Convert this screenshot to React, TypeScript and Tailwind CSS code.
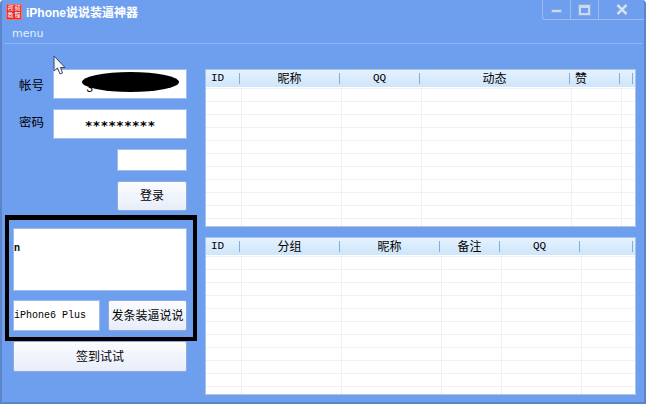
import React from 'react'

type Col = {
  label: string
  head: string
  body: string
  left?: boolean
  mono?: boolean
}

const TOP_COLS: Col[] = [
  { label: 'ID', head: 'w-[34px]', body: 'w-[36px]', left: true, mono: true },
  { label: '昵称', head: 'w-[100px]', body: 'w-[100px]' },
  { label: 'QQ', head: 'w-[80px]', body: 'w-[80px]', mono: true },
  { label: '动态', head: 'w-[150px]', body: 'w-[150px]' },
  { label: '赞', head: 'w-[50px]', body: 'w-[50px]', left: true },
  { label: '', head: 'w-[13px]', body: 'w-[12px]' },
]

const BOTTOM_COLS: Col[] = [
  { label: 'ID', head: 'w-[34px]', body: 'w-[36px]', left: true, mono: true },
  { label: '分组', head: 'w-[100px]', body: 'w-[100px]' },
  { label: '昵称', head: 'w-[100px]', body: 'w-[100px]' },
  { label: '备注', head: 'w-[60px]', body: 'w-[60px]' },
  { label: 'QQ', head: 'w-[80px]', body: 'w-[80px]', mono: true },
  { label: '', head: 'w-[53px]', body: 'w-[52px]' },
]

const ROWS = [0, 1, 2, 3, 4, 5, 6, 7, 8, 9, 10]

const SANS = "font-['Liberation_Sans','Noto_Sans_CJK_SC',sans-serif]"
const MONO = "font-['Liberation_Mono','Noto_Sans_CJK_SC',monospace]"

function Grid({ cols }: { cols: Col[] }) {
  return (
    <div className="h-[158px] shrink-0 bg-white border border-[#a9c3ea] border-b-[#b9c4d4] overflow-hidden">
      <div className="flex h-[17px] bg-gradient-to-b from-[#e4f2fe] to-[#cfe5fa]">
        {cols.map((c, i) => (
          <div key={i} className={`${c.head} shrink-0 h-full py-[3px]`}>
            <div
              className={`h-full border-r border-[#85aedb] flex items-center text-black ${
                c.left ? 'pl-[5px]' : 'justify-center'
              } ${c.mono ? `${MONO} text-[11px]` : `${SANS} text-[12px]`}`}
            >
              {c.label}
            </div>
          </div>
        ))}
      </div>
      <div className="pt-[1px] pr-[1px]">
        {ROWS.map((r) => (
          <div key={r} className="flex h-[13px] border-t border-[#f0f0f0]">
            {cols.map((c, i) => (
              <div
                key={i}
                className={`${c.body} shrink-0 h-full ${i < cols.length - 1 ? 'border-r border-[#f0f0f0]' : ''}`}
              />
            ))}
          </div>
        ))}
      </div>
    </div>
  )
}

function Btn({ className, children }: { className: string; children: React.ReactNode }) {
  return (
    <div
      className={`${className} flex items-center justify-center whitespace-nowrap rounded-[2px] border border-[#8fabd9] bg-gradient-to-b from-[#fbfcfe] to-[#e7edfa] text-black text-[12px] ${SANS}`}
    >
      {children}
    </div>
  )
}

export default function App() {
  return (
    <div
      className={`relative w-[646px] h-[404px] overflow-hidden bg-[#6e9fef] border-l-2 border-b-2 border-r-2 border-[#5b84c9] rounded-t-[4px] ${SANS}`}
    >
      {/* title bar */}
      <div className="flex h-[25px] items-start">
        <div className="ml-[4px] mt-[4px] w-[16px] h-[16px] bg-[#e3262b] grid grid-cols-2 place-items-center text-[6px] leading-[7px] text-white border border-[#f07070]">
          <span>视</span>
          <span>频</span>
          <span>教</span>
          <span>程</span>
        </div>
        <div className="ml-[4px] mt-[4px] text-[12px] leading-[18px] font-bold text-white">iPhone说说装逼神器</div>
        <div className="ml-auto flex h-[20px] w-[102px] border-l border-b border-[#9dbcf2] rounded-bl-[3px] text-[#d8e4fa]">
          <div className="w-[28px] flex items-center justify-center border-r border-[#9dbcf2]">
            <div className="w-[11px] h-[4px] mt-[3px] bg-[#c9d9f6] border border-[#8fa9d6]" />
          </div>
          <div className="w-[28px] flex items-center justify-center border-r border-[#9dbcf2]">
            <div className="w-[11px] h-[10px] border-2 border-t-[3px] border-[#c9d9f6] outline outline-1 outline-[#8fa9d6]" />
          </div>
          <div className="flex-1 flex items-center justify-center">
            <svg width="12" height="11" viewBox="0 0 12 11">
              <path d="M1.5 1 L10.5 10 M10.5 1 L1.5 10" stroke="#8fa9d6" strokeWidth="3.6" />
              <path d="M1.5 1 L10.5 10 M10.5 1 L1.5 10" stroke="#d8e4fa" strokeWidth="2.2" />
            </svg>
          </div>
        </div>
      </div>

      {/* menu */}
      <div className="h-[18px] flex items-start pl-[10px]">
        <span className="text-[11px] leading-[17px] text-[#e6eefc] font-['DejaVu_Sans',sans-serif]">menu</span>
      </div>
      <div className="mx-[2px] h-px bg-[#92b5f3]" />

      <div className="flex pt-[25px]">
        {/* left column */}
        <div className="w-[174px] ml-[11px] flex flex-col">
          <div className="flex h-[30px]">
            <div className="w-[40px] pl-[6px] text-[12.5px] leading-[35px] text-black">帐号</div>
            <div className="relative flex-1 bg-white border border-[#9dbcec] overflow-hidden">
              <span className={`${MONO} absolute left-[32px] top-[10px] text-[12px] text-black`}>3</span>
              <div className="absolute left-[28px] top-[2px] w-[97px] h-[20px] rounded-[50%] bg-black" />
            </div>
          </div>
          <div className="flex h-[30px] mt-[10px]">
            <div className="w-[40px] pl-[6px] text-[12.5px] leading-[28px] text-black">密码</div>
            <div className="flex-1 bg-white border border-[#9dbcec] flex items-center justify-center pt-[3px] text-[13px] font-bold text-black font-['DejaVu_Sans_Mono',monospace]">
              *********
            </div>
          </div>
          <div className="self-end w-[70px] h-[22px] mt-[10px] bg-white border border-[#9dbcec]" />
          <Btn className="self-end w-[70px] h-[30px] mt-[10px]">登录</Btn>

          <div className="w-[192px] -ml-[8px] mt-[4px] h-[126px] border-[4px] border-t-[5px] border-black pl-[4px] pr-[6px] pt-[8px]">
            <div className="h-[63px] bg-white border border-[#9dbcec] flex items-start pt-[16px]">
              <span className={`${MONO} text-[10px] font-bold leading-[8px] text-black`}>n</span>
            </div>
            <div className="flex justify-between mt-[9px]">
              <div className={`w-[87px] h-[31px] bg-white border border-[#9dbcec] flex items-center text-[10px] text-black ${MONO}`}>
                iPhone6 Plus
              </div>
              <Btn className="w-[79px] h-[31px]">发条装逼说说</Btn>
            </div>
          </div>
          <Btn className="w-[174px] h-[31px]">签到试试</Btn>
        </div>

        {/* grids */}
        <div className="ml-[18px] w-[431px] flex flex-col gap-[10px]">
          <Grid cols={TOP_COLS} />
          <Grid cols={BOTTOM_COLS} />
        </div>
      </div>

      {/* mouse pointer in the shot */}
      <svg className="absolute left-[51px] top-[55px]" width="14" height="21" viewBox="0 0 14 21">
        <path
          d="M1 1 L1 16 L4.5 13 L7 19 L9.5 18 L7.5 12.5 L12 12.5 Z"
          fill="#f4f6fa"
          stroke="#3a4660"
          strokeWidth="1"
        />
      </svg>
    </div>
  )
}
